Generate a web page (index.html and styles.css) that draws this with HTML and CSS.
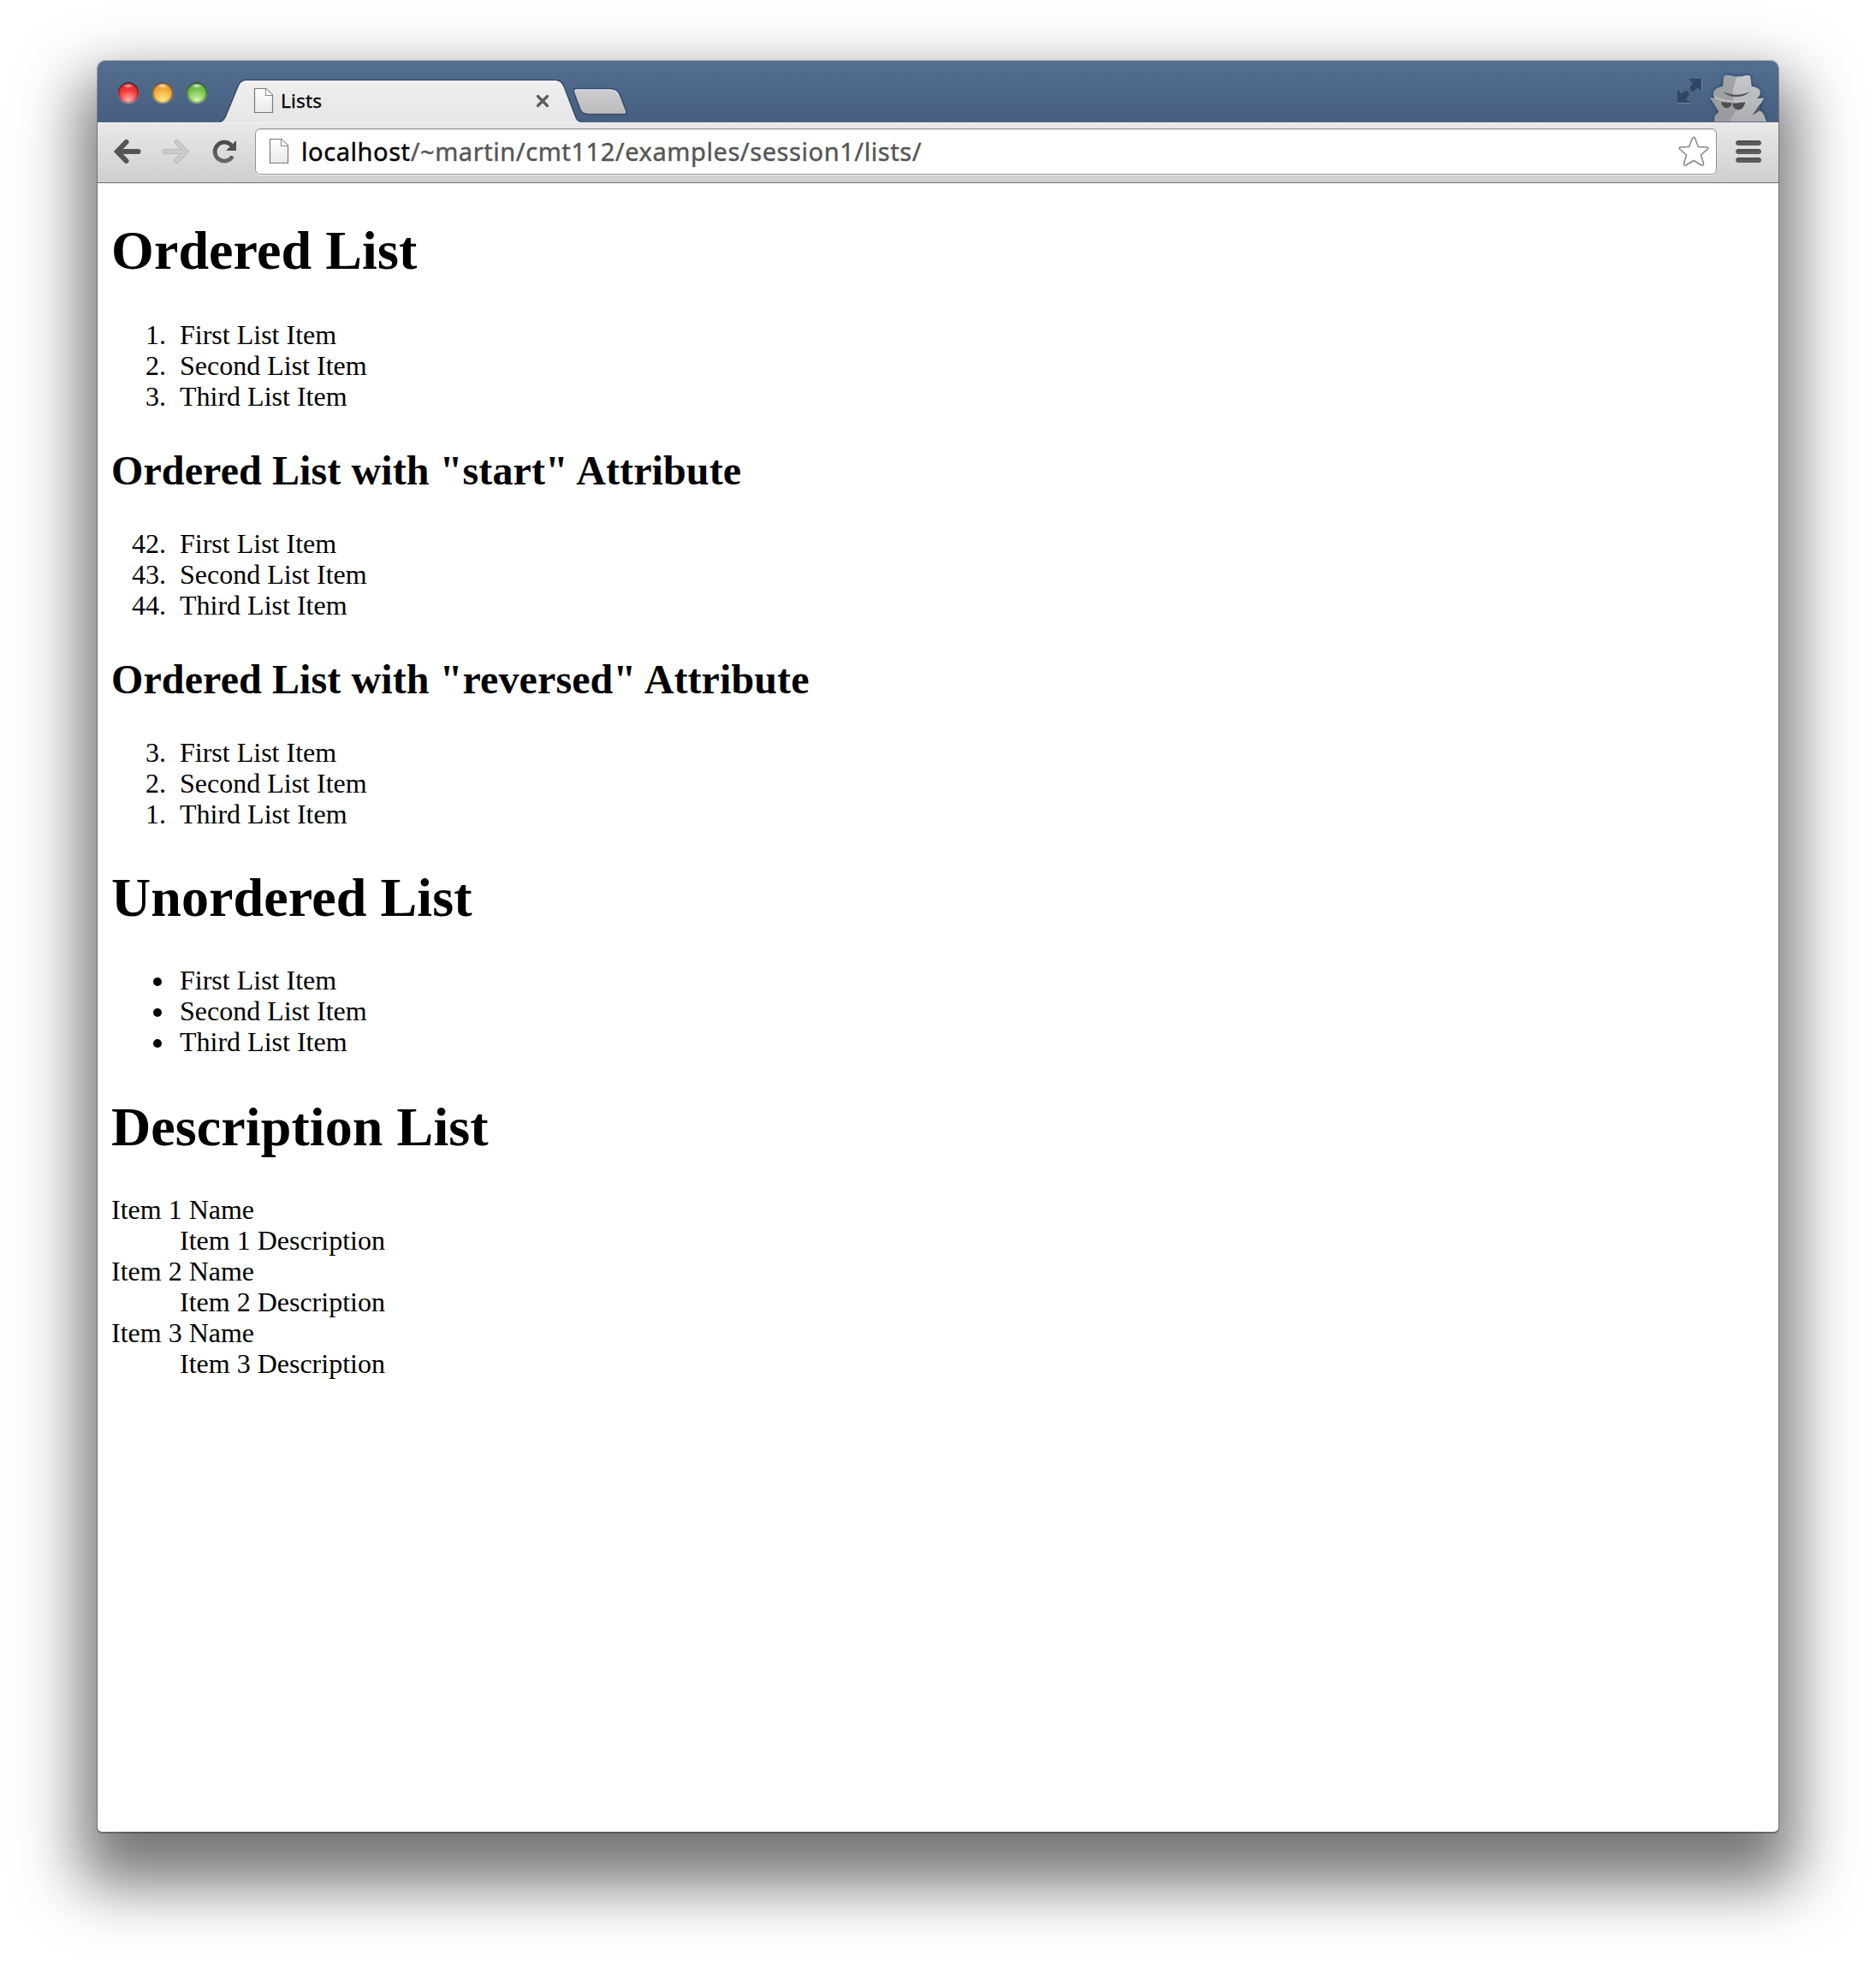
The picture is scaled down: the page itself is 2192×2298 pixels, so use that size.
FILE: index.html
```html
<!DOCTYPE html>
<html lang="en">
<head>
<meta charset="utf-8">
<title>Lists</title>
<link rel="stylesheet" href="styles.css">
</head>
<body>
<svg class="defs" width="0" height="0" aria-hidden="true">
  <defs>
    <linearGradient id="paper" x1="0" y1="0" x2="0" y2="1"><stop offset="0" stop-color="#fff"/><stop offset="1" stop-color="#e9e9ea"/></linearGradient>
    <linearGradient id="tabfill" x1="0" y1="0" x2="0" y2="1"><stop offset="0" stop-color="#efeff0"/><stop offset="1" stop-color="#e6e6e6"/></linearGradient>
    <linearGradient id="newfill" x1="0" y1="0" x2="0" y2="1"><stop offset="0" stop-color="#cdcdd0"/><stop offset="1" stop-color="#bcbcbf"/></linearGradient>
    <linearGradient id="glyph" x1="0" y1="0" x2="0" y2="1"><stop offset="0" stop-color="#4a4a4a"/><stop offset="1" stop-color="#666"/></linearGradient>
    <linearGradient id="coat" x1="0" y1="0" x2="0" y2="1"><stop offset="0" stop-color="#c6c8ca"/><stop offset="1" stop-color="#acaeb2"/></linearGradient>
    <symbol id="page" viewBox="0 0 24 32">
      <path d="M1.5 1.5H15L22.5 9V29.5H1.5Z" fill="url(#paper)" stroke="#7b7b7b" stroke-width="1.2"/>
      <path d="M14.5 1.5V9.5H22.5" fill="#fff" stroke="#8a8a8a" stroke-width="1.1"/>
    </symbol>
  </defs>
</svg>
<div class="window">
  <header class="titlebar">
    <div class="lights">
      <span class="light red"></span><span class="light amber"></span><span class="light green"></span>
    </div>
    <div class="tab">
      <svg class="tab-shape" width="424" height="50" viewBox="0 0 424 50">
        <path d="M0 50C5 49 6 46 8 42L22 8C24 3 26 1 32 1H393C399 1 401 4 403 8L416 42C418 47 419 49 424 50Z" fill="url(#tabfill)"/>
        <path d="M0 49.3C5 49 6 46 8 42L22 8C24 3 26 .7 32 .7H393C399 .7 401 4 403 8L416 42C418 47 419 49 424 49.3" fill="none" stroke="#34435f" stroke-width="1.3"/>
        <path d="M29 2.2H395" stroke="#fff" stroke-width="1.2"/>
      </svg>
      <svg class="tab-icon" width="24" height="32"><use href="#page"/></svg>
      <span class="tab-title">Lists</span>
      <svg class="tab-close" width="16" height="16" viewBox="0 0 16 16"><path d="M2.5 2.5L13.5 13.5M13.5 2.5L2.5 13.5" stroke="#5c5c5c" stroke-width="3.2" stroke-linecap="round"/></svg>
    </div>
    <svg class="new-tab" width="66" height="34" viewBox="0 0 66 34">
      <path d="M5 1.500H44C51 1.500 54 3 57 10L63.500 27C64.500 30 64 31.500 61 31.500H20C14 31.500 12 30 10 26L2.500 6C1.500 3 2.500 1.500 5 1.500Z" fill="url(#newfill)" stroke="#35486a" stroke-width="1.500"/>
      <path d="M5 3H44C49 3 52 4 55 9" fill="none" stroke="#dfdfe2" stroke-width="1.200"/>
    </svg>
    <svg class="fullscreen" width="30" height="30" viewBox="0 0 30 30">
      <g fill="#2f4666"><path d="M14 1H29V16L24.500 11.500L20 15.500C18 16.500 14.500 13 15.500 11L19 6Z"/><path d="M1 14L5.500 18.500L10 15C12 14 15.500 17.500 14.500 19.500L11 24.500L16 29H1Z"/></g>
      <path d="M29.500 1V16M1 29.500H16" stroke="#7189a8"/>
    </svg>
    <svg class="incognito" width="72" height="58" viewBox="0 0 72 58">
      <path d="M7.300 58C7.500 54 7 52 9 50L12.300 46.700L10 42.700L2 30L8 31C6 29 5.500 25 6.700 22.700C8 20 12 18 17.300 16.700L18 5.500C20 3 24 3.500 27 4.500C32 6 38 5.500 42 4.500C46 3.500 49 4 49.300 6L50.700 16.700C55 17.500 59 19 60.300 21.500C61.500 25 60.500 29 56 30.700L65.300 30.700L58 42.700L52 50L60 45C63 47 64.500 48.500 65 50L68 58Z" fill="url(#coat)"/>
      <path d="M18 5.500C20 3 24 3.500 27 4.500C29.500 5.300 32 5.600 34 5.600C30 13 28 22 29 31.500L34 43C31 47 27 52 25.700 58H7.300C7.500 54 7 52 9 50L12.300 46.700L10 42.700L2 30L8 31C6 29 5.500 25 6.700 22.700C8 20 12 18 17.300 16.700Z" fill="#8c8f92" opacity=".62"/>
      <path d="M6.500 28.500C20 35 46 36 59 28.500C57 31 54 31.500 50 32C40 36 20 36 8 31Z" fill="#d4d5d7" opacity=".8"/>
      <path d="M18 23C26 28 40 28 48 23C42 31 24 31 18 23Z" fill="#4d4f53"/>
      <path d="M15 35L27.300 36.500C27 40 24.500 42.500 21.500 42.300C18 42 15.500 39 15 35ZM28.300 37L43.300 35.300C42 41 39 44.300 35.500 44.300C31.500 44.300 28.500 41 28.300 37Z" fill="#4c4e52"/>
      <path d="M51.500 50.500L61 37L60.500 44.800Z" fill="#4b5465"/>
    </svg>
  </header>
  <nav class="toolbar">
    <svg class="back" width="32" height="30" viewBox="0 0 32 30"><path d="M14.500 4L4 15L14.500 26M5 15H28.500" fill="none" stroke="#555" stroke-width="6" stroke-linecap="round" stroke-linejoin="miter"/></svg>
    <svg class="forward" width="32" height="30" viewBox="0 0 32 30"><path d="M17.500 4L28 15L17.500 26M27 15H3.500" fill="none" stroke="#b5b5b5" stroke-width="6" stroke-linecap="round"/><path d="M17.500 4L28 15L17.500 26M27 15H3.500" fill="none" stroke="#cbcbcb" stroke-width="4.400" stroke-linecap="round"/></svg>
    <svg class="reload" width="30" height="30" viewBox="0 0 30 30"><path d="M22.500 22.300A11 11 0 1 1 21.500 7" fill="none" stroke="url(#glyph)" stroke-width="4.800" stroke-linecap="round"/><path d="M28 2V14H16Z" fill="#505050"/></svg>
    <div class="omnibox">
      <svg class="site-icon" width="24" height="32"><use href="#page"/></svg>
      <span class="url"><b>localhost</b>/~martin/cmt112/examples/session1/lists/</span>
      <svg class="star" width="38" height="38" viewBox="0 0 38 38"><path d="M17.500 3.500Q19 1 20.500 3.500L24.500 13.500L34.500 14Q37 14.500 35 16.500L27.500 23L30.500 33Q30.800 36 28 35L19 29.500L10 35Q7.200 36 7.500 33L10.500 23L3 16.500Q1 14.500 3.500 14L13.500 13.500Z" fill="#fff" stroke="#858585" stroke-width="1.500"/></svg>
    </div>
    <svg class="menu" width="30" height="28" viewBox="0 0 30 28"><g fill="url(#glyph)" stroke="#444" stroke-width=".8"><rect x=".5" y="1.500" width="29" height="5" rx="2.500"/><rect x=".5" y="11.500" width="29" height="5" rx="2.500"/><rect x=".5" y="21.500" width="29" height="5" rx="2.500"/></g></svg>
  </nav>
  <main class="page">
    <h1 class="first">Ordered List</h1>
    <ol>
      <li>First List Item</li>
      <li>Second List Item</li>
      <li>Third List Item</li>
    </ol>
    <h2>Ordered List with "start" Attribute</h2>
    <ol start="42">
      <li>First List Item</li>
      <li>Second List Item</li>
      <li>Third List Item</li>
    </ol>
    <h2>Ordered List with "reversed" Attribute</h2>
    <ol reversed>
      <li>First List Item</li>
      <li>Second List Item</li>
      <li>Third List Item</li>
    </ol>
    <h1>Unordered List</h1>
    <ul>
      <li>First List Item</li>
      <li>Second List Item</li>
      <li>Third List Item</li>
    </ul>
    <h1 class="last">Description List</h1>
    <dl>
      <dt>Item 1 Name</dt>
      <dd>Item 1 Description</dd>
      <dt>Item 2 Name</dt>
      <dd>Item 2 Description</dd>
      <dt>Item 3 Name</dt>
      <dd>Item 3 Description</dd>
    </dl>
  </main>
</div>
</body>
</html>
```
FILE: styles.css
```css
* { box-sizing: border-box; }

@counter-style wide-decimal {
  system: extends decimal;
  suffix: ".\a0\a0";
}

body {
  margin: 0;
  padding: 70px 114px 158px;
  height: 2298px;
  overflow: hidden;
  background: #fff;
}

.defs { position: absolute; }

svg { display: block; flex: none; }

.window {
  display: flex;
  flex-direction: column;
  height: 2070px;
  border-radius: 9px 9px 5px 5px;
  background: #fff;
  box-shadow: 0 1px 0 1px rgba(0, 0, 0, .28), 0 42px 72px 20px rgba(0, 0, 0, .54);
}

.titlebar {
  display: flex;
  align-items: flex-end;
  flex: none;
  height: 73px;
  padding: 0 10px 0 24px;
  border-radius: 9px 9px 0 0;
  background: linear-gradient(#667, #667) bottom / 100% 1px no-repeat,
    linear-gradient(#546e8f, #465f80);
  box-shadow: inset 0 1px #aeb6c0;
}

.lights { display: flex; gap: 16px; padding-bottom: 23px; }

.light {
  width: 24px;
  height: 24px;
  border-radius: 50%;
  box-shadow: inset 0 1px 3px rgba(0, 0, 0, .75), inset 0 0 2px rgba(0, 0, 0, .5), 0 1px 1px rgba(255, 255, 255, .45);
}
.red { background: radial-gradient(ellipse 7px 3px at 50% 17%, #fff9, #fff0), radial-gradient(circle at 50% 90%, #ffb5b5, #f13a3c 50%, #d3191f); }
.amber { background: radial-gradient(ellipse 7px 3px at 50% 17%, #fffc, #fff0), radial-gradient(circle at 50% 90%, #fff08e, #f4af3d 50%, #d98423); }
.green { background: radial-gradient(ellipse 7px 3px at 50% 17%, #fffc, #fff0), radial-gradient(circle at 50% 90%, #d9f6b0, #7cc750 50%, #4f9a32); }

.tab {
  position: relative;
  display: flex;
  align-items: center;
  width: 424px;
  height: 50px;
  margin-left: 14px;
  padding: 0 38px 0 40px;
  font: 22.500px/30px "Noto Sans", "Open Sans", sans-serif;
  letter-spacing: .2px;
  -webkit-text-stroke: .3px;
  color: #000;
}
.tab-shape { position: absolute; left: 0; top: 0; }
.tab-icon, .tab-title, .tab-close { z-index: 1; }
.tab-title { margin-left: 8px; }
.tab-close { margin-left: auto; }

.new-tab { margin: 0 0 7px -12px; }
.fullscreen { margin: 0 7px 22px auto; }
.incognito { margin-bottom: 1px; filter: drop-shadow(0 0 2px #1e3558); clip-path: inset(-6px -6px 0); }

.toolbar {
  display: flex;
  align-items: center;
  flex: none;
  height: 71px;
  padding: 0 20px 2px 19px;
  background: linear-gradient(#e9e9e9, #cfcfcf);
  border-bottom: 1px solid #6f6f6f;
  box-shadow: inset 0 1px #f4f4f4;
}
.forward { margin-left: 24px; }
.reload { margin-left: 27px; }

.omnibox {
  display: flex;
  align-items: center;
  flex: 1;
  height: 54px;
  margin: 0 22px 0 20px;
  padding: 0 7px 0 15px;
  background: #fff;
  border: 1px solid #949494;
  border-radius: 6px;
  box-shadow: inset 0 1px 1px #ddd, 0 1px #eee;
}
.url {
  flex: 1;
  margin-left: 14px;
  font: 29px/40px "Noto Sans", "Open Sans", sans-serif;
  letter-spacing: .57px;
  -webkit-text-stroke: .4px;
  white-space: nowrap;
  color: #555;
}
.url b { font-weight: 400; color: #000; }

.page {
  flex: 1;
  padding: 0 16px;
  font: 32px/36px "Liberation Serif", "Times New Roman", serif;
  color: #000;
}
.page h1 { margin: 44px 0 42px; font-size: 64px; line-height: 72px; letter-spacing: .1px; }
.page .first { margin: 43px 0 44px; }
.page .last { margin-top: 46px; }
.page h2 { margin: 41px 0 39px; font-size: 48px; line-height: 56px; letter-spacing: .11px; }
.page ol, .page ul { margin: 0; padding-left: 80px; }
.page ol { list-style: wide-decimal; }
.page ul li { margin-left: -5px; padding-left: 5px; }
.page dl { margin: 0; }
.page dd { margin-left: 80px; }
```
